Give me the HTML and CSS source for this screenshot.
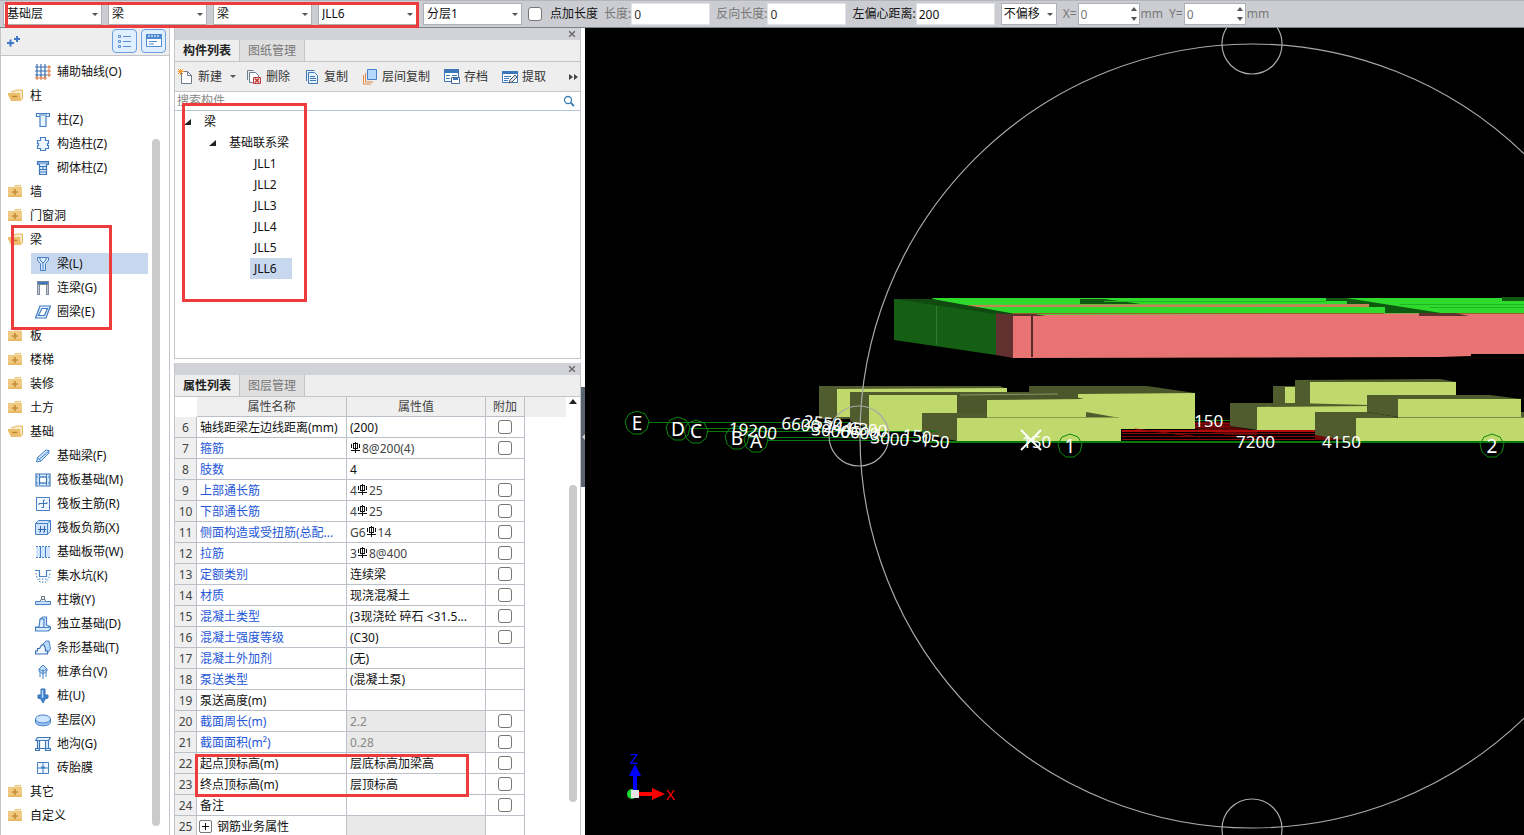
FILE: index.html
```html
<!DOCTYPE html>
<html lang="zh-CN">
<head>
<meta charset="utf-8">
<title>构件列表</title>
<link rel="stylesheet" href="styles.css">
</head>
<body>
<svg class="defs" aria-hidden="true">
  <symbol id="folder" viewBox="0 0 16 16"><path d="M0 3h14v10H0z" fill="#f0ca83"/><path d="M7 1h6v1.500H6z" fill="#ecc173"/><path d="M0 11h14v2H0z" fill="#e9b964"/><path d="M4 8h6M7 5v6" stroke="#c48d35" stroke-width="1.600"/></symbol>
  <symbol id="open" viewBox="0 0 16 16"><path d="M3 4l6-2h5.500v9l-2.500 2" fill="#fbebc9" stroke="#e6b45e"/><path d="M-1 5h13l1 8H3z" fill="#edbf6c"/><path d="M4 8.500h5" stroke="#bf862c" stroke-width="1.400"/></symbol>
  <symbol id="axis" viewBox="0 0 16 16"><path d="M0 3h12M0 7h12M0 11h12M2 0v13M6 0v13M10 0v13" stroke="#3a70b5" stroke-width="1.200" fill="none"/><path d="M13 2h2v2h-2zM13 6h2v2h-2zM13 10h2v2h-2zM1 13h2v2H1zM5 13h2v2H5zM9 13h2v2H9z" fill="#fff" stroke="#d96f35"/></symbol>
  <symbol id="column" viewBox="0 0 16 16"><path d="M1.500 1.500h13v3h-3.500v10h-6v-10h-3.500zM4 3h8" fill="#e8f3ff" stroke="#4580c4" stroke-width="1.200"/></symbol>
  <symbol id="structcol" viewBox="0 0 16 16"><path d="M5.500 1.500h5v3h3v3h-1v2h1v3h-3v2h-5v-2h-3v-3h1v-2h-1v-3h3z" fill="#eef6ff" stroke="#4580c4" stroke-width="1.200"/></symbol>
  <symbol id="brickcol" viewBox="0 0 16 16"><path d="M2.500 1.500h11v3h-2v10h-7v-10h-2z" fill="#d6e9ff" stroke="#3f78ba" stroke-width="1.200"/><path d="M3 3h10M5 6.500h6M5 9.500h6M5 12h6M8 7v3" stroke="#3f78ba" fill="none"/></symbol>
  <symbol id="beam" viewBox="0 0 16 16"><path d="M2.500 1.500h11v3l-3 3v7h-5v-7l-3-3z" fill="#d9eaff" stroke="#4580c4"/><path d="M5 2v2l3 3 3-3V2M8 7v7" stroke="#4580c4" fill="none"/></symbol>
  <symbol id="link" viewBox="0 0 16 16"><path d="M2 1h12v14h-3V5H5v10H2z" fill="#7f8b99"/><path d="M3 2h10v2H3z" fill="#3f78ba"/><path d="M3.500 5v9M12.500 5v9" stroke="#c1c8d0"/></symbol>
  <symbol id="ring" viewBox="0 0 16 16"><path d="M5 2h10.500L11 14H.5zM7 4.500h5.500l-3 7H3.500z" fill="#e0efff" fill-rule="evenodd" stroke="#3f7ac4" stroke-width="1.200"/></symbol>
  <symbol id="fbeam" viewBox="0 0 16 16"><path d="M1.500 14l1-4.500L11 2l3 .5v2.500l-8 8zM2.500 9.500l3.500 3.500M4.500 11L14 3" fill="#cde5ff" stroke="#4580c4"/></symbol>
  <symbol id="raft" viewBox="0 0 16 16"><path d="M1 2h14v12H1zM4.500 5h7v6h-7z" fill="#d9ebff" fill-rule="evenodd" stroke="#3f78ba" stroke-width="1.200"/><path d="M4.500 2v12M11.500 2v12M1 5h14M1 11h14" stroke="#3f78ba" stroke-dasharray="2 1"/></symbol>
  <symbol id="raftmain" viewBox="0 0 16 16"><path d="M1.500 1.500h13v13h-13z" fill="#f2f8ff" stroke="#4580c4"/><path d="M4 9V7.500h8V6M8.500 4v7.500H6.500M8.500 4h1.500" fill="none" stroke="#3a70b5"/></symbol>
  <symbol id="raftneg" viewBox="0 0 16 16"><path d="M.5 3.500l3-3h12v11l-3 3H.5zM.5 3.500h12v11M12.500 3.500l3-3" fill="#cfe5ff" stroke="#4580c4"/><path d="M3 9.500h8M5.500 6v6H4M9.500 6v6H8" fill="none" stroke="#2d62a8"/></symbol>
  <symbol id="strip" viewBox="0 0 16 16"><path d="M1 3h14v10H1z" fill="#d2e7ff"/><path d="M1 2.500h14M1 13.500h14" stroke="#4580c4" stroke-dasharray="2 1"/><path d="M5.500 3v10M10.500 3v10" stroke="#4580c4"/></symbol>
  <symbol id="pit" viewBox="0 0 16 16"><path d="M0 2.500h4.500v6h7v-6H16" fill="none" stroke="#4580c4" stroke-width="1.200"/><path d="M1 5l1 5 3 4h6l3-4 1-5M4 11h8" fill="none" stroke="#4580c4" stroke-dasharray="1.500 1.500"/></symbol>
  <symbol id="pier" viewBox="0 0 16 16"><path d="M.5 9.500h15v3H.5z" fill="#c4dfff" stroke="#4580c4"/><path d="M5 9.500l1-2h4l1 2M6.500 7.500v-3h3v3" fill="#eee" stroke="#6c7785"/></symbol>
  <symbol id="isolated" viewBox="0 0 16 16"><path d="M.5 11h3.500l1-8 3-2h3.500v8l4 2v2l-2 2H.5zM.5 11.500h13l2-1M5 3h4v8" fill="#d9ebff" stroke="#4580c4" stroke-width="1.200"/></symbol>
  <symbol id="stripf" viewBox="0 0 16 16"><path d="M7 5l4-4h3l1.500 8-3 4z" fill="#b8d8ff" stroke="#4580c4"/><path d="M.5 14v-3h2V8.500h2L6.500 5H9l1.500 3.500v2.500h2v3z" fill="#f0f7ff" stroke="#3a70b5" stroke-width="1.200"/></symbol>
  <symbol id="cap" viewBox="0 0 16 16"><path d="M8 1l4 4v2L8 10 4 7V5zM8 5v10M5 8v5M11 8v5M4 5l4 2 4-2" fill="#bfdcff" stroke="#4580c4"/></symbol>
  <symbol id="pile" viewBox="0 0 16 16"><path d="M6 1h4v6h3v3l-3 1-2 4-2-4-3-1V7h3z" fill="#3f80cc" stroke="#3771b5"/><path d="M7.500 2v8" stroke="#b6d7ff" stroke-width="1.500"/></symbol>
  <symbol id="cushion" viewBox="0 0 16 16"><path d="M.5 7v3c0 5 15 5 15 0V7" fill="#9fc9f5" stroke="#4580c4"/><ellipse cx="8" cy="7" rx="7.500" ry="4" fill="#cfe5ff" stroke="#4580c4"/></symbol>
  <symbol id="trench" viewBox="0 0 16 16"><path d="M2.500 1.500h13l-2 3H.5zM2.500 4.500h2v8h-2zM10.500 4.500h3v8h-3zM.5 12.500h4v2h-4zM10.500 12.500h5v2h-5zM4.500 12.500h6" fill="#e4f1ff" stroke="#3f78ba" stroke-width="1.200"/></symbol>
  <symbol id="brick" viewBox="0 0 16 16"><path d="M2.500 2.500h11v11h-11zM8 2v11M2 8h11" fill="#f2f8ff" stroke="#4580c4"/><path d="M6 7.500h4" stroke="#4580c4" stroke-width="2"/></symbol>
  <symbol id="rebar" viewBox="0 0 12 12"><path d="M5.500 0v11M1 8.500h9M3.500 2v5M7.500 2v5" fill="none" stroke="#111"/><path d="M3 1.500h5M3 6.500h5M1.500 2v4M9.500 2v4" fill="none" stroke="#111"/></symbol>
  <symbol id="bubble" viewBox="-13 -13 26 26"><path d="M0-12l8 3 4 7-2 8-6 5h-8l-6-5-2-8 4-7z" fill="none" stroke="#0c8a10"/></symbol>
</svg>

<header class="options">
  <span class="dd"><select aria-label="楼层"><option>基础层</option></select></span>
  <span class="dd"><select aria-label="构件大类"><option>梁</option></select></span>
  <span class="dd"><select aria-label="构件类型"><option>梁</option></select></span>
  <span class="dd"><select aria-label="构件名称"><option>JLL6</option></select></span>
  <span class="dd"><select aria-label="分层"><option>分层1</option></select></span>
  <label class="check-label"><input class="check" type="checkbox">点加长度</label>
  <label class="field dim">长度:<input class="num" type="text" value="0"></label>
  <label class="field dim">反向长度:<input class="num" type="text" value="0"></label>
  <label class="field">左偏心距离:<input class="num" type="text" value="200"></label>
  <span class="dd dd-short"><select aria-label="偏移"><option>不偏移</option></select></span>
  <label class="field dim spin"><span>X=</span><span class="spinbox"><input type="text" value="0"></span><span>mm</span></label>
  <label class="field dim spin"><span>Y=</span><span class="spinbox"><input type="text" value="0"></span><span>mm</span></label>
  <span class="mark mark-top"></span>
</header>

<main class="work">
  <nav class="sidebar">
    <div class="side-head">
      <svg class="plus" viewBox="0 0 14 14"><path d="M0 9h7M3.500 5.500v7M7 5h6M10 2v6" stroke="#3f78c4" stroke-width="2"/></svg>
      <button class="view" aria-label="列表视图"><svg viewBox="0 0 16 16"><path d="M1.500 2.500h2v2h-2zM1.500 7.500h2v2h-2zM1.500 12.500h2v2h-2zM6 3.500h8M6 8.500h8M6 13.500h8" fill="none" stroke="#5b8fd0"/></svg></button>
      <button class="view" aria-label="图标视图"><svg viewBox="0 0 16 16"><path d="M.5 1.500h15v12H.5z" fill="#fff" stroke="#4f8ad3"/><path d="M0 1h16v5H0z" fill="#4f8ad3"/><path d="M3 2v2M6 2v2M9 2v2M12 2v2" stroke="#fff"/><path d="M3 8.500h8M3 11h5" stroke="#4f8ad3"/></svg></button>
    </div>
    <ul class="modules">
      <li class="sub"><button><svg><use href="#axis"/></svg>辅助轴线(O)</button></li>
      <li><button><svg><use href="#open"/></svg>柱</button></li>
      <li class="sub"><button><svg><use href="#column"/></svg>柱(Z)</button></li>
      <li class="sub"><button><svg><use href="#structcol"/></svg>构造柱(Z)</button></li>
      <li class="sub"><button><svg><use href="#brickcol"/></svg>砌体柱(Z)</button></li>
      <li><button><svg><use href="#folder"/></svg>墙</button></li>
      <li><button><svg><use href="#folder"/></svg>门窗洞</button></li>
      <li><button><svg><use href="#open"/></svg>梁</button></li>
      <li class="sub"><button class="on"><svg><use href="#beam"/></svg>梁(L)</button></li>
      <li class="sub"><button><svg><use href="#link"/></svg>连梁(G)</button></li>
      <li class="sub"><button><svg><use href="#ring"/></svg>圈梁(E)</button></li>
      <li><button><svg><use href="#folder"/></svg>板</button></li>
      <li><button><svg><use href="#folder"/></svg>楼梯</button></li>
      <li><button><svg><use href="#folder"/></svg>装修</button></li>
      <li><button><svg><use href="#folder"/></svg>土方</button></li>
      <li><button><svg><use href="#open"/></svg>基础</button></li>
      <li class="sub"><button><svg><use href="#fbeam"/></svg>基础梁(F)</button></li>
      <li class="sub"><button><svg><use href="#raft"/></svg>筏板基础(M)</button></li>
      <li class="sub"><button><svg><use href="#raftmain"/></svg>筏板主筋(R)</button></li>
      <li class="sub"><button><svg><use href="#raftneg"/></svg>筏板负筋(X)</button></li>
      <li class="sub"><button><svg><use href="#strip"/></svg>基础板带(W)</button></li>
      <li class="sub"><button><svg><use href="#pit"/></svg>集水坑(K)</button></li>
      <li class="sub"><button><svg><use href="#pier"/></svg>柱墩(Y)</button></li>
      <li class="sub"><button><svg><use href="#isolated"/></svg>独立基础(D)</button></li>
      <li class="sub"><button><svg><use href="#stripf"/></svg>条形基础(T)</button></li>
      <li class="sub"><button><svg><use href="#cap"/></svg>桩承台(V)</button></li>
      <li class="sub"><button><svg><use href="#pile"/></svg>桩(U)</button></li>
      <li class="sub"><button><svg><use href="#cushion"/></svg>垫层(X)</button></li>
      <li class="sub"><button><svg><use href="#trench"/></svg>地沟(G)</button></li>
      <li class="sub"><button><svg><use href="#brick"/></svg>砖胎膜</button></li>
      <li><button><svg><use href="#folder"/></svg>其它</button></li>
      <li><button><svg><use href="#folder"/></svg>自定义</button></li>
    </ul>
    <span class="thumb side-thumb"></span>
    <span class="mark mark-side"></span>
  </nav>

  <div class="panels">
    <section class="panel list-panel">
      <div class="strip"><button class="close" aria-label="关闭"><svg viewBox="0 0 7 7"><path d="M1 1l5 5M6 1L1 6" stroke="#666" stroke-width="1.200"/></svg></button></div>
      <div class="tabs"><button class="tab active">构件列表</button><button class="tab">图纸管理</button></div>
      <div class="tools">
        <button class="t-new"><svg viewBox="0 0 16 16"><path d="M3.500 2.500h6l4 4v8h-10z" fill="#fff" stroke="#6d7c8e"/><path d="M9.500 2.500v4h4" fill="none" stroke="#6d7c8e"/><path d="M0 0l5 5M5 0L0 5M2.500 0v6M0 2.500h6" stroke="#ee9a35"/></svg>新建<i class="caret"></i></button>
        <button class="t-del"><svg viewBox="0 0 16 16"><path d="M1.500 11V1.500h6" fill="none" stroke="#6d7c8e"/><path d="M3.500 3.500h6l3 3v7h-9z" fill="#fff" stroke="#6d7c8e"/><path d="M7.500 8.500h7v6h-7z" fill="#fbe3e3" stroke="#bf3a3a"/><path d="M9 9.500l4 4M13 9.500l-4 4" stroke="#bf3a3a" stroke-width="1.500"/></svg>删除</button>
        <button class="t-copy"><svg viewBox="0 0 16 16"><path d="M2.500 12V1.500h8" fill="none" stroke="#3f78ba"/><path d="M4.500 3.500h6l3 3v8h-9z" fill="#e6f2ff" stroke="#3f78ba"/><path d="M6 7.500h5M6 9.500h6M6 11.500h6" stroke="#3f78ba"/></svg>复制</button>
        <button class="t-layer"><svg viewBox="0 0 16 16"><path d="M1.500 6v9H9M3.500 4v9H11" fill="none" stroke="#e08a45"/><path d="M5.500.5h9v10h-9z" fill="#b5d8ff" stroke="#4580c4"/></svg>层间复制</button>
        <button class="t-save"><svg viewBox="0 0 16 16"><path d="M.5.5h14v12H.5z" fill="#fff" stroke="#3f78ba"/><path d="M0 0h15v4H0z" fill="#3f78ba"/><path d="M2 6.500h4M2 9.500h4M8 6.500h5" stroke="#3f78ba"/><path d="M7.500 8.500h8v6h-8z" fill="#fff" stroke="#4b6f9c"/><path d="M9 9h5v2H9z" fill="#3f78ba"/></svg>存档</button>
        <button class="t-get"><svg viewBox="0 0 16 16"><path d="M.5 2.500h15v11H.5z" fill="#fff" stroke="#3f78ba"/><path d="M0 2h16v3H0z" fill="#3f78ba"/><path d="M2 7.500h7M2 9.500h5M2 11.500h4" stroke="#3f78ba"/><path d="M7 14l1-3 5-5 2 2-5 5z" fill="#dfe6ee" stroke="#48535f"/></svg>提取</button>
        <button class="more" aria-label="更多"><svg viewBox="0 0 9 6"><path d="M0 0l4 3-4 3zM5 0l4 3-4 3z" fill="#444"/></svg></button>
      </div>
      <label class="search"><input type="text" placeholder="搜索构件" aria-label="搜索构件"><svg viewBox="0 0 12 12"><circle cx="5" cy="5" r="3.500" fill="none" stroke="#3f80b8" stroke-width="1.300"/><path d="M7.500 7.500L11 11" stroke="#3f80b8" stroke-width="1.800"/></svg></label>
      <ul class="tree">
        <li class="l1"><i class="twist"></i>梁</li>
        <li class="l2"><i class="twist"></i>基础联系梁</li>
        <li class="l3"><span>JLL1</span></li>
        <li class="l3"><span>JLL2</span></li>
        <li class="l3"><span>JLL3</span></li>
        <li class="l3"><span>JLL4</span></li>
        <li class="l3"><span>JLL5</span></li>
        <li class="l3"><span class="on">JLL6</span></li>
      </ul>
      <span class="mark mark-tree"></span>
    </section>

    <section class="panel prop-panel">
      <div class="strip"><button class="close" aria-label="关闭"><svg viewBox="0 0 7 7"><path d="M1 1l5 5M6 1L1 6" stroke="#666" stroke-width="1.200"/></svg></button></div>
      <div class="tabs"><button class="tab active">属性列表</button><button class="tab">图层管理</button></div>
      <div class="grid-area">
        <table class="props">
          <colgroup><col class="c-no"><col class="c-name"><col class="c-val"><col class="c-add"><col></colgroup>
          <thead><tr><th class="corner"></th><th>属性名称</th><th>属性值</th><th>附加</th><th class="rest"></th></tr></thead>
          <tbody>
            <tr><th>6</th><td>轴线距梁左边线距离(mm)</td><td>(200)</td><td><input class="check" type="checkbox" aria-label="附加 6"></td></tr>
            <tr><th>7</th><td class="b">箍筋</td><td class="r"><svg><use href="#rebar"/></svg>8@200(4)</td><td><input class="check" type="checkbox" aria-label="附加 7"></td></tr>
            <tr><th>8</th><td class="b">肢数</td><td>4</td><td></td></tr>
            <tr><th>9</th><td class="b">上部通长筋</td><td class="r">4<svg><use href="#rebar"/></svg>25</td><td><input class="check" type="checkbox" aria-label="附加 9"></td></tr>
            <tr><th>10</th><td class="b">下部通长筋</td><td class="r">4<svg><use href="#rebar"/></svg>25</td><td><input class="check" type="checkbox" aria-label="附加 10"></td></tr>
            <tr><th>11</th><td class="b">侧面构造或受扭筋(总配...</td><td class="r">G6<svg><use href="#rebar"/></svg>14</td><td><input class="check" type="checkbox" aria-label="附加 11"></td></tr>
            <tr><th>12</th><td class="b">拉筋</td><td class="r">3<svg><use href="#rebar"/></svg>8@400</td><td><input class="check" type="checkbox" aria-label="附加 12"></td></tr>
            <tr><th>13</th><td class="b">定额类别</td><td>连续梁</td><td><input class="check" type="checkbox" aria-label="附加 13"></td></tr>
            <tr><th>14</th><td class="b">材质</td><td>现浇混凝土</td><td><input class="check" type="checkbox" aria-label="附加 14"></td></tr>
            <tr><th>15</th><td class="b">混凝土类型</td><td>(3现浇砼 碎石 &lt;31.5...</td><td><input class="check" type="checkbox" aria-label="附加 15"></td></tr>
            <tr><th>16</th><td class="b">混凝土强度等级</td><td>(C30)</td><td><input class="check" type="checkbox" aria-label="附加 16"></td></tr>
            <tr><th>17</th><td class="b">混凝土外加剂</td><td>(无)</td><td></td></tr>
            <tr><th>18</th><td class="b">泵送类型</td><td>(混凝土泵)</td><td></td></tr>
            <tr><th>19</th><td>泵送高度(m)</td><td></td><td></td></tr>
            <tr><th>20</th><td class="b">截面周长(m)</td><td class="off">2.2</td><td><input class="check" type="checkbox" aria-label="附加 20"></td></tr>
            <tr><th>21</th><td class="b">截面面积(m²)</td><td class="off">0.28</td><td><input class="check" type="checkbox" aria-label="附加 21"></td></tr>
            <tr><th>22</th><td>起点顶标高(m)</td><td>层底标高加梁高</td><td><input class="check" type="checkbox" aria-label="附加 22"></td></tr>
            <tr><th>23</th><td>终点顶标高(m)</td><td>层顶标高</td><td><input class="check" type="checkbox" aria-label="附加 23"></td></tr>
            <tr><th>24</th><td>备注</td><td></td><td><input class="check" type="checkbox" aria-label="附加 24"></td></tr>
            <tr><th>25</th><td class="group"><div><button class="expand" aria-label="展开"><svg viewBox="0 0 9 9"><path d="M1 4.500h7M4.500 1v7" stroke="#111"/></svg></button>钢筋业务属性</div></td><td class="off"></td><td></td></tr>
          </tbody>
        </table>
        <div class="vbar"><i class="up"></i><span class="thumb"></span></div>
        <span class="mark mark-rows"></span>
      </div>
    </section>
    <button class="splitter" aria-label="收起"></button>
  </div>

  <section class="viewport">
    <svg viewBox="585 28 939 807" preserveAspectRatio="xMinYMin slice">
      <!-- slab and edge beams -->
      <path d="M894 299h38l84 15-3 3-17 38-102-15z" fill="#145f14"/>
      <path d="M936.500 306v39" stroke="#2c7a2c"/>
      <path d="M932 299l1-1h591v18h-509z" fill="#2edb2c"/>
      <path d="M963 305l406-1v3H975z" fill="#c48458"/>
      <path d="M894 299h38l84 15h-20z" fill="#104a10"/>
      <path d="M1080 299h24l37 5h-61z" fill="#0f5a11"/>
      <path d="M1326 298h20l95 15h-56v-6h-16v-3h-22v-3h-21zM1502 297h22v4h-22z" fill="#0f5a11"/>
      <path d="M1104 301.500h222M1400 304.500h124M1430 307.500h94" stroke="#22b522" fill="none"/>
      <path d="M996 313l17 3v42l-17-3z" fill="#633030"/>
      <path d="M1013 315l511-2v41h-53v2l-31 1-427 1z" fill="#e87373"/>
      <path d="M1013 313.500h371M1441 313.500h83" stroke="#985f2b" fill="none"/>
      <path d="M1000 314h35l11 2h-33zM1419 313h36l14 3h-50z" fill="#633030"/>
      <path d="M1032 316v41" stroke="#582a2a" stroke-width="2"/>
      <!-- left foundation blocks -->
      <path d="M819 386h181l7 3-20 4-137 26h-31z" fill="#505c2d"/>
      <path d="M837 389l170-1v4l-157 1v24h-13z" fill="#bfd96d"/>
      <path d="M850 392h190l18 3-140 10-49 24-19-8z" fill="#505c2d"/>
      <path d="M869 395h88v36h-88z" fill="#bfd96d"/>
      <path d="M1029 386h118l48 7-112 7-54-6z" fill="#4b562a"/>
      <path d="M1078 394l117-1v36h-117z" fill="#bfd96d"/>
      <path d="M957 394l101-1 26 6v3h-97v16h-30z" fill="#4b562a"/>
      <path d="M960 395l98-1" stroke="#8c9568"/>
      <path d="M987 400l97-1 2 18-99 1z" fill="#bfd96d"/>
      <path d="M922 413h65v5h-30v23l-35-7z" fill="#505c2d"/>
      <path d="M957 418h164v24H957z" fill="#bfd96d"/>
      <path d="M1084 399h4v18h-4z" fill="#bfd96d"/>
      <path d="M1086 412l34 6h-34z" fill="#505c2d"/>
      <path d="M987 417.500h130" stroke="#8b9c50"/>
      <!-- rebar zone -->
      <path d="M1195 422h35v4l27 5v4h-30l-32-6z" fill="#5a0606"/>
      <path d="M1122 431h193" stroke="#b00a0a" stroke-width="2"/>
      <path d="M1122 433.500h193M1122 436.500h193M1122 439.500h234M1195 423.500h35M1195 426.500h35M1135 429l65 8" stroke="#8c0808" fill="none"/>
      <path d="M1315 435h41v5h-41z" fill="#6e0707"/>
      <path d="M1195 420.500h35" stroke="#08850b"/>
      <g class="dims"><text x="1194" y="427">150</text></g>
      <!-- right foundation blocks -->
      <path d="M1273 386h22v-6l145-1 16 3-140 25h-21l-22-4z" fill="#505c2d"/>
      <path d="M1285 387h10v16h-10zM1310 382h146v24h-146z" fill="#bfd96d"/>
      <path d="M1230 403h65l72 2v3l-110 22-27-4z" fill="#505c2d"/>
      <path d="M1257 407l110-1v24h-110z" fill="#bfd96d"/>
      <path d="M1367 395h123l31 4v5l-123 13-31-5z" fill="#505c2d"/>
      <path d="M1398 399h123v18h-123z" fill="#bfd96d"/>
      <path d="M1315 412h52l31 5-42 25-41-7zM1521 412h3v5h-3z" fill="#505c2d"/>
      <path d="M1356 418h168v24h-168z" fill="#bfd96d"/>
      <path d="M1398 417.500h126" stroke="#7b8a45"/>
      <!-- axis lines -->
      <path d="M649 422.500h200M690 428.500h180M708 431.500h230M748 437.500h180M768 440.500h154" stroke="#087a0b" fill="none"/>
      <path d="M922 442h602" stroke="#087a0b" stroke-width="2"/>
      <!-- orbit control -->
      <g fill="none" stroke="#a8a8a8" stroke-width="1.200">
        <circle cx="1252" cy="436" r="392"/><circle cx="1252" cy="44" r="30"/><circle cx="1252" cy="829" r="30"/><circle cx="859" cy="436" r="30"/>
      </g>
      <g class="bubbles">
        <use href="#bubble" x="624" y="410" width="26" height="26"/><use href="#bubble" x="665" y="416" width="26" height="26"/><use href="#bubble" x="683" y="419" width="26" height="26"/><use href="#bubble" x="724" y="425" width="26" height="26"/><use href="#bubble" x="743" y="428" width="26" height="26"/><use href="#bubble" x="1057" y="433" width="26" height="26"/><use href="#bubble" x="1479" y="433" width="26" height="26"/>
        <text x="637" y="430">E</text><text x="678" y="436">D</text><text x="696" y="438">C</text><text x="737" y="445">B</text><text x="756" y="448">A</text><text x="1070" y="453">1</text><text x="1492" y="453">2</text>
      </g>
      <g class="dims">
        <text transform="translate(728 434) rotate(7)">19200</text>
        <text transform="translate(781 429) rotate(5)">6600</text>
        <text transform="translate(803 427) rotate(6)">2550</text>
        <text transform="translate(811 435) rotate(5)">3000</text>
        <text transform="translate(823 432) rotate(5)">2445</text>
        <text transform="translate(840 437) rotate(5)">6600</text>
        <text transform="translate(848 434) rotate(5)">6300</text>
        <text transform="translate(870 443) rotate(5)">3000</text>
        <text transform="translate(902 441) rotate(5)">150</text>
        <text transform="translate(920 446) rotate(5)">150</text>
        <text x="1022" y="448">150</text><text x="1236" y="448">7200</text><text x="1322" y="448">4150</text>
      </g>
      <path d="M1021 430l20 20M1041 430l-20 20" stroke="#fff" stroke-width="2"/>
      <circle cx="632" cy="794" r="5" fill="#1fd83a"/>
      <path d="M635 790v-16" stroke="#00f" stroke-width="4"/><path d="M629 776l6-12 6 12z" fill="#00f"/>
      <path d="M639 794h14" stroke="#f00" stroke-width="4"/><path d="M652 788l13 6-13 6z" fill="#f00"/>
      <path d="M631 790h8v8h-8z" fill="#e4e4e4"/>
      <text class="axis-z" x="630" y="764">Z</text><text class="axis-x" x="666" y="800">X</text>
    </svg>
  </section>
</main>
</body>
</html>
```
FILE: styles.css
```css
* { box-sizing: border-box; }
body {
  margin: 0;
  height: 100vh;
  display: flex;
  flex-direction: column;
  overflow: hidden;
  background: #fff;
  color: #111;
  font: 12px/20px "Noto Sans", "Noto Sans CJK SC", sans-serif;
}
button, input, select { font: inherit; color: inherit; margin: 0; }
button { border: 0; padding: 0; background: none; }
ul { list-style: none; margin: 0; padding: 0; }
.defs { position: absolute; width: 0; height: 0; }

/* option bar */
.options {
  position: relative;
  flex: none;
  height: 28px;
  display: flex;
  align-items: center;
  gap: 6px;
  padding: 0 3px;
  background: #cccdd2;
  border-top: 1px solid #b4b6bb;
  border-bottom: 1px solid #7d838b;
  white-space: nowrap;
}
.dd { position: relative; flex: 0 0 99px; height: 22px; }
.dd select {
  appearance: none;
  width: 100%;
  height: 100%;
  padding: 0 3px;
  border: 1px solid #adb0b6;
  border-radius: 0;
  background: #fff;
}
.dd::after, .caret {
  content: "";
  border: 3px solid transparent;
  border-top-color: #555;
  border-bottom: 0;
}
.dd::after { position: absolute; right: 4px; top: 10px; }
.dd-short { flex-basis: 56px; }
.dd-short select { padding: 0 2px; }
.check {
  appearance: none;
  flex: none;
  width: 14px;
  height: 14px;
  border: 1px solid #777;
  border-radius: 3px;
  background: #fff;
}
.check-label { display: flex; align-items: center; gap: 8px; }
.field { display: flex; align-items: center; }
.dim { color: #777; }
.dim .num { color: #333; }
.num { width: 79px; height: 22px; border: 1px solid #e2e3e6; padding: 0 2px; background: #fff; }
.spin { gap: 1px; }
.spinbox { position: relative; width: 62px; height: 22px; }
.spinbox input { width: 100%; height: 100%; border: 1px solid #adb0b6; padding: 0 2px; background: #fff; }
.spinbox::before, .spinbox::after { content: ""; position: absolute; right: 3px; border: 3px solid transparent; }
.spinbox::before { top: 4px; border-bottom: 4px solid #555; border-top: 0; }
.spinbox::after { bottom: 4px; border-top: 4px solid #555; border-bottom: 0; }

/* red call-out frames */
.mark { position: absolute; border: 3px solid #ee3b3b; pointer-events: none; }
.mark-top { left: 5px; top: 1px; width: 414px; height: 26px; }
.mark-side { left: 10px; top: 197px; width: 101px; height: 105px; }
.mark-tree { left: 7px; top: 75px; width: 125px; height: 199px; }
.mark-rows { left: 20px; top: 357px; width: 274px; height: 43px; }

.work { flex: 1; min-height: 0; display: flex; }

/* module tree */
.sidebar { position: relative; flex: 0 0 170px; border: 1px solid #c3c5ca; border-width: 0 1px; overflow: hidden; }
.side-head {
  display: flex;
  align-items: center;
  gap: 4px;
  height: 28px;
  padding: 0 3px 1px 6px;
  background: #eee;
  border-bottom: 1px solid #c3c5ca;
}
.plus { width: 14px; height: 14px; margin-right: auto; }
.view { width: 25px; height: 24px; border: 1px solid #6ba0df; border-radius: 4px; background: #e0efff; display: grid; place-items: center; }
.view svg { width: 16px; height: 16px; }
.modules { padding-top: 3px; }
.modules li { height: 24px; padding: 2px 21px 1px 3px; }
.modules .sub { padding-left: 30px; }
.modules button { display: flex; align-items: center; gap: 6px; width: 100%; height: 21px; padding-left: 4px; white-space: nowrap; }
.modules svg { flex: none; width: 16px; height: 16px; }
.modules .on { background: #c7d7ee; }
.thumb { display: block; width: 8px; border-radius: 4px; background: #cbcbcb; }
.side-thumb { position: absolute; right: 9px; top: 111px; bottom: 9px; }

/* middle column */
.panels { position: relative; flex: 0 0 415px; display: flex; flex-direction: column; gap: 4px; padding: 0 4px; overflow: hidden; }
.panel { position: relative; border: 1px solid #c3c5ca; border-top: 0; }
.list-panel { flex: none; height: 331px; }
.prop-panel { flex: 1; min-height: 0; border-bottom: 0; display: flex; flex-direction: column; }
.strip { display: flex; justify-content: flex-end; align-items: center; height: 12px; padding-right: 4px; background: #d2d3d8; }
.close { display: flex; }
.close svg { width: 8px; height: 8px; }
.tabs { flex: none; display: flex; height: 22px; background: #eee; border-bottom: 1px solid #c3c5ca; }
.tab { width: 65px; border-right: 1px solid #c3c5ca; background: #dfdfe0; color: #777; }
.tab.active { background: #eee; color: #222; font-weight: bold; }
.tools { display: flex; align-items: center; height: 30px; padding: 0 2px 0 3px; background: #eee; border-bottom: 1px solid #c3c5ca; color: #333; }
.tools button { display: flex; align-items: center; gap: 4px; white-space: nowrap; }
.tools svg { width: 16px; height: 16px; }
.t-new { margin-right: 10px; }
.t-del, .t-copy, .t-layer, .t-save { margin-right: 14px; }
.caret { margin-left: 4px; }
.tools .more { margin-left: auto; }
.tools .more svg { width: 9px; height: 6px; }
.search { display: flex; align-items: center; height: 19px; padding: 0 5px 0 2px; border-bottom: 1px solid #b5c5d6; }
.search input { flex: 1; min-width: 0; height: 18px; border: 0; padding: 0; outline: 0; }
.search input::placeholder { color: #888; }
.search svg { width: 12px; height: 12px; }
.tree li { display: flex; align-items: center; height: 21px; }
.tree .l1 { padding-left: 9px; }
.tree .l2 { padding-left: 34px; }
.tree .l3 { padding-left: 75px; }
.tree .l3 span { width: 42px; height: 21px; padding-left: 4px; line-height: 21px; }
.tree .on { background: #c7d7ee; }
.twist { margin-right: 13px; border: solid transparent; border-width: 0 0 6px 7px; border-bottom-color: #222; }

/* property grid */
.grid-area { position: relative; flex: 1; min-height: 0; display: flex; overflow: hidden; }
.props { flex: 1; align-self: flex-start; table-layout: fixed; border-collapse: separate; border-spacing: 0; width: 100%; }
.c-no { width: 22px; }
.c-name { width: 150px; }
.c-val { width: 139px; }
.c-add { width: 39px; }
.props th, .props td { height: 21px; padding: 0; border-right: 1px solid #bcc0c8; border-bottom: 1px solid #bcc0c8; line-height: 20px; font-weight: normal; white-space: nowrap; overflow: hidden; }
.props tbody th, .props tbody td { padding-top: 1px; line-height: 19px; }
.props th { background: #efefef; color: #444; }
.props thead th { height: 20px; line-height: 19px; }
.props thead .corner { background: #fff; border-color: transparent; }
.props thead .rest { border-color: transparent; }
.props td:nth-child(2), .props td:nth-child(3) { padding-left: 3px; }
.props tbody td:nth-child(4) { padding-top: 0; }
.props td .check { display: block; margin: 0 auto; }
.props .b { color: #2456d8; }
.props .r { color: #444; }
.props .r svg { width: 12px; height: 12px; vertical-align: -1px; }
.props .off { background: #e9e9e9; color: #888; }
.group div { display: flex; align-items: center; gap: 5px; }
.props td.group { padding-left: 2px; }
.expand { display: grid; place-items: center; width: 13px; height: 13px; border: 1px solid #777; border-radius: 2px; background: #fff; }
.expand svg { width: 9px; height: 9px; }
.vbar { flex: 0 0 14px; display: flex; flex-direction: column; align-items: center; padding: 2px 0 33px; }
.up { border: 4px solid transparent; border-top: 0; border-bottom: 5px solid #222; }
.vbar .thumb { flex: 1; margin-top: 81px; }
.splitter { position: absolute; right: 0; top: 359px; width: 4px; height: 100px; background: #5a6370; }
.splitter::after { content: ""; position: absolute; right: 0; top: 47px; border: 3px solid transparent; border-left: 0; border-right-color: #ccc; }

/* 3D view */
.viewport { flex: 1; min-width: 0; background: #000; overflow: hidden; }
.viewport > svg { display: block; width: 100%; height: 100%; }
.dims { fill: #fff; font-size: 17px; }
.bubbles { fill: #fff; font-size: 19px; text-anchor: middle; }
.axis-z { fill: #00f; font-size: 15px; }
.axis-x { fill: #f00; font-size: 15px; }
```
